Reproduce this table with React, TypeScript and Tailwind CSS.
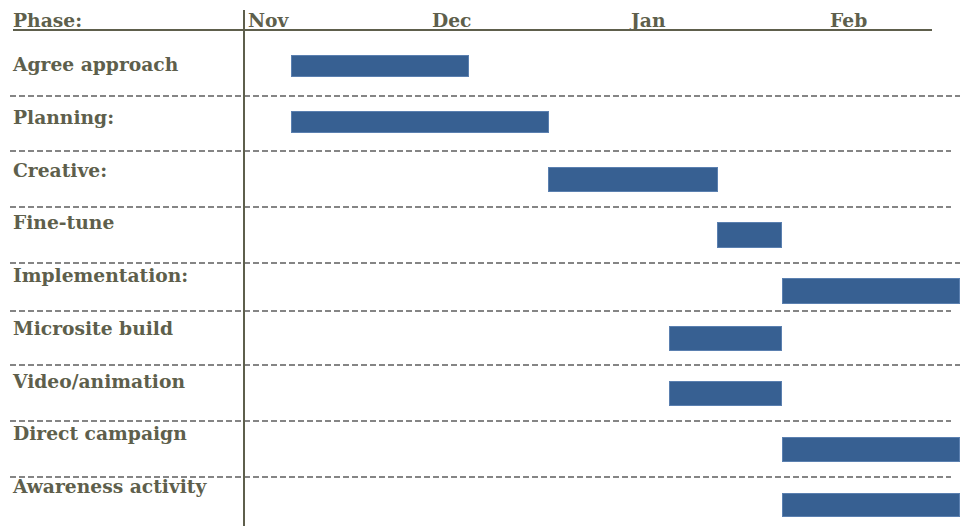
const phases = [
  { label: 'Agree approach', h: 'h-[66px]', line: 'w-[950px]', bar: 'mt-[24px] ml-[46px] w-[178px] h-[22px]' },
  { label: 'Planning:', h: 'h-[55px]', line: 'w-[941px]', bar: 'mt-[14px] ml-[46px] w-[258px] h-[22px]' },
  { label: 'Creative:', h: 'h-[56px]', line: 'w-[941px]', bar: 'mt-[15px] ml-[303px] w-[170px] h-[25px]' },
  { label: 'Fine-tune', h: 'h-[56px]', line: 'w-[950px]', bar: 'mt-[14px] ml-[472px] w-[65px] h-[26px]' },
  { label: 'Implementation:', h: 'h-[48px]', line: 'w-[941px]', bar: 'mt-[14px] ml-[537px] w-[178px] h-[26px]' },
  { label: 'Microsite build', h: 'h-[54px]', line: 'w-[950px]', bar: 'mt-[14px] ml-[424px] w-[113px] h-[25px]' },
  { label: 'Video/animation', h: 'h-[56px]', line: 'w-[941px]', bar: 'mt-[15px] ml-[424px] w-[113px] h-[25px]' },
  { label: 'Direct campaign', h: 'h-[56px]', line: 'w-[941px]', bar: 'mt-[15px] ml-[537px] w-[178px] h-[25px]' },
  { label: 'Awareness activity', h: 'h-[48px]', line: 'w-[950px]', bar: 'mt-[15px] ml-[537px] w-[178px] h-[24px]' },
];

const months = [
  { name: 'Nov', w: 'w-[184px]' },
  { name: 'Dec', w: 'w-[199px]' },
  { name: 'Jan', w: 'w-[199px]' },
  { name: 'Feb', w: 'w-[100px]' },
];

export default function App() {
  return (
    <main className="w-[975px] h-[526px] overflow-hidden bg-white font-['DejaVu_Serif',serif] font-bold text-[18.7px] text-[#5e5f4c]">
      {/* header: phase title + months, underlined */}
      <div className="ml-[13px] w-[919px] h-[31px] flex border-b-2 border-[#5e5f4c]">
        <div className="w-[230px] pt-[9px] leading-[22px]">Phase:</div>
        <div className="mt-[10px] flex-1 border-l-2 border-[#5e5f4c] flex pl-[3px]">
          {months.map((m) => (
            <div key={m.name} className={`${m.w} -mt-[1px] leading-[22px]`}>
              {m.name}
            </div>
          ))}
        </div>
      </div>

      {/* body: bar rows and label column share one grid cell */}
      <div className="grid">
        <div className="[grid-area:1/1] flex flex-col">
          {phases.map((p, i) => (
            <div
              key={p.label}
              className={`${p.h} ${p.line} ml-[10px] flex bg-no-repeat bg-bottom-left bg-[length:100%_2px] ${
                i < phases.length - 1
                  ? 'bg-[repeating-linear-gradient(to_right,#858585_0_6px,transparent_6px_9px)]'
                  : ''
              }`}
            >
              <div className="w-[233px] shrink-0" />
              <div className="flex-1 border-l-2 border-[#5e5f4c]">
                <div className={`${p.bar} bg-[#376092] border border-[#5b80b0]`} />
              </div>
            </div>
          ))}
        </div>
        <div className="[grid-area:1/1] flex flex-col pl-[13px] pt-[7px]">
          {phases.map((p) => (
            <div key={p.label} className="h-[52.75px] leading-[52.75px] whitespace-nowrap">
              {p.label}
            </div>
          ))}
        </div>
      </div>
    </main>
  );
}
